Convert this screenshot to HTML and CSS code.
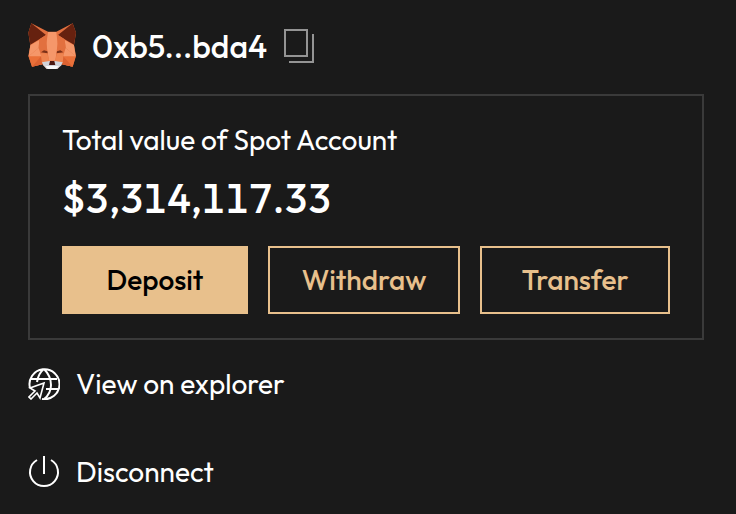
FILE: index.html
```html
<!DOCTYPE html>
<html lang="en">
<head>
<meta charset="utf-8">
<meta name="viewport" content="width=device-width, initial-scale=1">
<title>Account</title>
<link rel="stylesheet" href="styles.css">
</head>
<body>
<main class="wallet">
  <header class="account">
    <svg class="fox" viewBox="24 18 144 144" aria-hidden="true">
      <path fill="#e2703f" d="M34 22 84 47H109L158 22 168 50 162 88 168 120 158 152 126 145 112 159H80L67 145 36 152 25 120 31 88 25 50Z"/>
      <path fill="#66210f" d="M34 22 78 57 58 70 31 86 25 50ZM158 22 114 57 134 70 162 86 168 50Z"/>
      <path fill="#f5976a" d="M84 48H109L113 84 106 134H87L79 84ZM31 88 58 72 56 96 26 121ZM162 88 134 72 137 96 167 121Z"/>
      <path fill="#e2703f" d="M58 70 78 57 81 104 56 96ZM134 70 114 57 112 104 137 96Z"/>
      <path fill="#ea7039" d="M26 121 64 120 67 145 36 152ZM167 121 129 120 126 145 158 152Z"/>
      <path fill="#f5976a" d="M26 121 56 96 64 121ZM167 121 137 96 129 121Z"/>
      <path fill="#dc6231" d="M64 120 67 145 36 152ZM129 120 126 145 158 152Z"/>
      <path fill="#ee8450" d="M62 112 82 112 88 136 66 141ZM131 112 111 112 105 136 128 141Z"/>
      <path fill="#7a3018" d="M63 109 72 103 82 106 83 112ZM130 109 121 103 111 106 110 112Z"/>
      <path fill="#d0d3da" d="M66 139 88 135H105L128 139 124 148 112 159H80L70 148Z"/>
      <path fill="#f8f8f8" d="M76 150H117L108 159H84Z"/>
      <path fill="#4b1710" d="M90 135H103L106 147H87Z"/>
    </svg>
    <h1 class="address">0xb5...bda4</h1>
    <button class="copy" type="button" aria-label="Copy address">
      <svg viewBox="0 0 32 36" fill="none" stroke="#949494" stroke-width="2" aria-hidden="true">
        <path d="M2 2H24V28H2ZM30 6V34H6"/>
      </svg>
    </button>
  </header>

  <section class="card">
    <h2 class="label">Total value of Spot Account</h2>
    <p class="total">$3,314,117.33</p>
    <div class="actions">
      <button class="button primary" type="button">Deposit</button>
      <button class="button" type="button">Withdraw</button>
      <button class="button" type="button">Transfer</button>
    </div>
  </section>

  <nav class="menu">
    <a class="item" href="#explorer">
      <svg class="icon" viewBox="0 0 32 32" fill="none" stroke="currentColor" stroke-width="2" aria-hidden="true">
        <path d="M2 20A15 15 0 1 1 14 31M3 11H29M18 21H30M16 1C12 4 10 8 9 14M16 1C21 6 23 11 23 17 23 23 20 28 16 31"/>
        <path fill="#1a1a1a" stroke-width="1.6" d="M16 15 2 20 7 23 1 29 3 31 9 25 12 30Z"/>
      </svg>
      View on explorer
    </a>
    <button class="item" type="button">
      <svg class="icon" viewBox="0 0 32 32" fill="none" stroke="currentColor" stroke-width="2" aria-hidden="true">
        <path d="M9 4A14 14 0 1 0 23 4M16 0V18"/>
      </svg>
      Disconnect
    </button>
  </nav>
</main>
</body>
</html>
```
FILE: styles.css
```css
* {
  box-sizing: border-box;
}

body {
  margin: 0;
  background: #1a1a1a;
  color: #fff;
  font-family: Outfit, Lato, sans-serif;
  font-size: 28px;
  line-height: 36px;
}

h1, h2, p {
  margin: 0;
  font-weight: 400;
}

button {
  font: inherit;
  color: inherit;
  background: none;
  border: 0;
  padding: 0;
  cursor: pointer;
}

svg {
  display: block;
  flex: none;
}

.wallet {
  padding: 22px 32px 24px 28px;
}

.account {
  display: flex;
  align-items: center;
  gap: 16px;
  height: 48px;
}

.fox {
  width: 48px;
  height: 48px;
}

.address {
  font-size: 32px;
  font-weight: 500;
}

.copy svg {
  width: 32px;
  height: 36px;
}

.card {
  margin-top: 24px;
  padding: 26px 32px 24px;
  border: 2px solid #3a3a3a;
}

.label {
  font-size: 28px;
}

.total {
  margin: 12px 0 20px;
  font-size: 40px;
  line-height: 56px;
  font-weight: 500;
  font-variant-numeric: tabular-nums;
}

.actions {
  display: grid;
  grid-template-columns: 186fr 192fr 190fr;
  gap: 20px;
}

.button {
  height: 68px;
  border: 2px solid #e8c08c;
  color: #e8c08c;
  font-weight: 500;
}

.primary {
  background: #e8c08c;
  color: #000;
}

.menu {
  display: flex;
  flex-direction: column;
  align-items: flex-start;
  gap: 52px;
  margin-top: 26px;
}

.item {
  display: flex;
  align-items: center;
  gap: 16px;
  color: #fff;
  text-decoration: none;
}

.icon {
  width: 32px;
  height: 32px;
}
```
